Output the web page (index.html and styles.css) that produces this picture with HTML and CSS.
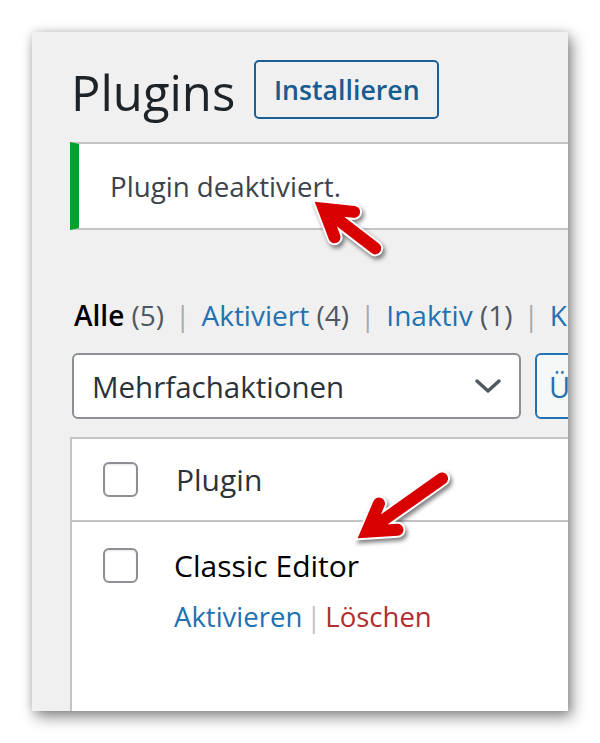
FILE: index.html
```html
<!DOCTYPE html>
<html lang="de">
<head>
<meta charset="utf-8">
<title>Plugins</title>
<link rel="stylesheet" href="styles.css">
</head>
<body>
<div class="shot">
  <div class="wrap">
    <div class="head">
      <h1 class="title">Plugins</h1>
      <a class="add-btn" href="#">Installieren</a>
    </div>
    <div class="notice"><p>Plugin deaktiviert.</p></div>
    <ul class="filters">
      <li><b class="current">Alle</b> <span class="count">(5)</span></li>
      <li class="sep">|</li>
      <li><a href="#">Aktiviert</a> <span class="count">(4)</span></li>
      <li class="sep">|</li>
      <li><a href="#">Inaktiv</a> <span class="count">(1)</span></li>
      <li class="sep">|</li>
      <li><a href="#">Kürzlich aktiv</a> <span class="count">(0)</span></li>
    </ul>
    <div class="bulk">
      <div class="select">
        <span>Mehrfachaktionen</span>
        <svg class="chev" width="26" height="14" viewBox="0 0 26 14"><path d="M2 2 L13 12 L24 2" fill="none" stroke="#50575e" stroke-width="3.4" stroke-linecap="round" stroke-linejoin="round"/></svg>
      </div>
      <button class="apply">Übernehmen</button>
    </div>
    <div class="table">
      <div class="thead">
        <span class="cb"></span>
        <span class="col">Plugin</span>
      </div>
      <div class="row">
        <span class="cb"></span>
        <div class="cell">
          <div class="name">Classic Editor</div>
          <div class="row-actions"><a href="#" class="act">Aktivieren</a><span class="bar">|</span><a href="#" class="del">Löschen</a></div>
        </div>
      </div>
    </div>
  </div>
  <svg class="arrows" width="536" height="679" viewBox="0 0 536 679">
    <defs>
      <g id="arrow1">
        <path d="M37 -16 L11 0 L37 16 M14 0 L76 0" fill="none" stroke="#ffffff" stroke-width="16" stroke-linecap="round" stroke-linejoin="miter" stroke-miterlimit="6"/>
        <path d="M37 -16 L11 0 L37 16 M14 0 L76 0" fill="none" stroke="#d80000" stroke-width="12" stroke-linecap="round" stroke-linejoin="miter" stroke-miterlimit="6"/>
      </g>
      <g id="arrow2">
        <path d="M37 -16 L11 0 L37 16 M14 0 L103 0" fill="none" stroke="#ffffff" stroke-width="16" stroke-linecap="round" stroke-linejoin="miter" stroke-miterlimit="6"/>
        <path d="M37 -16 L11 0 L37 16 M14 0 L103 0" fill="none" stroke="#d80000" stroke-width="12" stroke-linecap="round" stroke-linejoin="miter" stroke-miterlimit="6"/>
      </g>
    </defs>
    <use href="#arrow1" transform="translate(283 170) rotate(37.6)"/>
    <use href="#arrow2" transform="translate(326 506) rotate(-35.3)"/>
  </svg>
</div>
</body>
</html>
```
FILE: styles.css
```css
html, body {
  margin: 0;
  padding: 0;
  background: #ffffff;
}
body {
  font-family: "Open Sans", "Noto Sans", sans-serif;
}
.shot {
  position: relative;
  width: 536px;
  height: 679px;
  margin: 32px;
  background: #f0f0f1;
  overflow: hidden;
  box-shadow: 4px 6px 14px rgba(0, 0, 0, 0.45), 0 0 8px rgba(0, 0, 0, 0.15);
}
.wrap {
  width: 760px;
  padding: 28px 0 0 38px;
  display: flex;
  flex-direction: column;
  align-items: flex-start;
}
.head {
  display: flex;
  align-items: center;
  height: 59px;
  gap: 19px;
  margin-left: 1px;
}
.title {
  margin: 0;
  font-size: 49px;
  font-weight: 400;
  color: #1d2327;
  line-height: 59px;
  position: relative;
  top: 3px;
}
.add-btn {
  box-sizing: border-box;
  height: 59px;
  width: 185px;
  display: flex;
  align-items: center;
  justify-content: center;
  border: 2px solid #1e5f93;
  border-radius: 5px;
  color: #155c91;
  font-size: 26.7px;
  font-weight: 600;
  text-decoration: none;
}
.notice {
  box-sizing: border-box;
  width: 700px;
  height: 88px;
  margin-top: 23px;
  background: #ffffff;
  border-top: 2px solid #c3c4c7;
  border-bottom: 2px solid #c3c4c7;
  border-left: 9px solid #00a32a;
  display: flex;
  align-items: center;
  padding-left: 31px;
}
.notice p {
  margin: 0;
  font-size: 27.7px;
  color: #3c434a;
}
.filters {
  list-style: none;
  margin: 65px 0 0 4px;
  padding: 0;
  height: 40px;
  display: flex;
  align-items: center;
  font-size: 28px;
  line-height: 40px;
  white-space: nowrap;
}
.filters li {
  display: block;
}
.filters .current {
  color: #000000;
  font-weight: 600;
}
.filters a {
  color: #2271b1;
  text-decoration: none;
}
.filters .count {
  color: #50575e;
}
.filters .sep {
  color: #a7aaad;
  margin: 0 11px;
}
.bulk {
  display: flex;
  margin: 18px 0 0 2px;
  gap: 14px;
}
.select {
  box-sizing: border-box;
  width: 449px;
  height: 66px;
  border: 2px solid #8c8f94;
  border-radius: 6px;
  background: #ffffff;
  display: flex;
  align-items: center;
  justify-content: space-between;
  padding: 0 18px 0 18px;
  font-size: 29.5px;
  color: #2c3338;
}
.chev {
  display: block;
}
.apply {
  box-sizing: border-box;
  height: 66px;
  padding: 0 12px;
  border: 2px solid #2271b1;
  border-radius: 6px;
  background: #f6f7f7;
  color: #2271b1;
  font-family: inherit;
  font-size: 29px;
}
.table {
  box-sizing: border-box;
  width: 700px;
  margin-top: 18px;
  height: 300px;
  background: #ffffff;
  border-top: 2px solid #c3c4c7;
  border-left: 2px solid #c3c4c7;
}
.thead {
  box-sizing: border-box;
  height: 83px;
  border-bottom: 2px solid #c3c4c7;
  display: flex;
  align-items: center;
  padding-left: 31px;
}
.cb {
  box-sizing: border-box;
  display: block;
  flex: none;
  width: 35px;
  height: 35px;
  border: 2px solid #8c8f94;
  border-radius: 6px;
  background: #ffffff;
  box-shadow: inset 0 1px 2px rgba(0, 0, 0, 0.1);
}
.col {
  margin-left: 38px;
  font-size: 30px;
  color: #2c3338;
}
.row {
  display: flex;
  align-items: flex-start;
  padding: 26px 0 0 31px;
}
.cell {
  margin-left: 36px;
}
.name {
  font-size: 30px;
  line-height: 35px;
  color: #000000;
}
.row-actions {
  margin-top: 16px;
  font-size: 27.5px;
  line-height: 36px;
}
.act {
  color: #2271b1;
  text-decoration: none;
}
.del {
  color: #b32d2e;
  text-decoration: none;
}
.bar {
  color: #c3c4c7;
  margin: 0 4px;
}
.arrows {
  position: absolute;
  left: 0;
  top: 0;
  filter: drop-shadow(2px 3px 2px rgba(0, 0, 0, 0.5));
  pointer-events: none;
}
```
